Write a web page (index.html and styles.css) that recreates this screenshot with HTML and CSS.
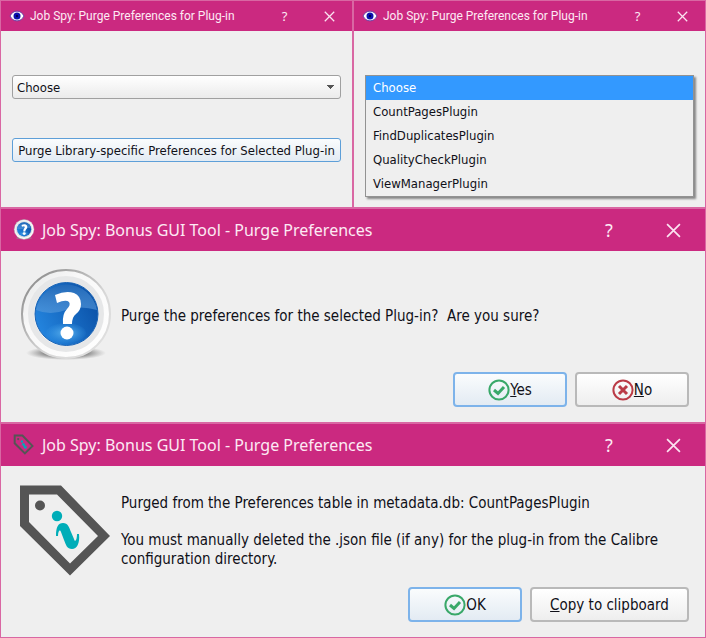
FILE: index.html
```html
<!DOCTYPE html>
<html lang="en">
    <head>
        <meta charset="UTF-8">
        <meta name="viewport" content="width=device-width, initial-scale=1.0">
        <title>Job Spy: Purge Preferences</title>
        <link rel="stylesheet" href="styles.css">
    </head>
    <body>
        <svg class="defs" aria-hidden="true">
            <defs>
                <linearGradient id="ring" x1="0" y1="0" x2="1" y2="1">
                    <stop offset="0" stop-color="#e6e7e8"/>
                    <stop offset="0.35" stop-color="#f8f8f8"/>
                    <stop offset="1" stop-color="#ffffff"/>
                </linearGradient>
                <linearGradient id="edge" x1="0" y1="0" x2="1" y2="1">
                    <stop offset="0" stop-color="#808080"/>
                    <stop offset="0.6" stop-color="#d8d8d8"/>
                    <stop offset="1" stop-color="#e2e2e2"/>
                </linearGradient>
                <linearGradient id="ball" x1="0" y1="0.8" x2="1" y2="0.3">
                    <stop offset="0" stop-color="#2588e2"/>
                    <stop offset="1" stop-color="#0a50a6"/>
                </linearGradient>
                <linearGradient id="gloss" x1="0" y1="0" x2="0" y2="1">
                    <stop offset="0" stop-color="#2068b8"/>
                    <stop offset="1" stop-color="#5a9cdc" stop-opacity="0.6"/>
                </linearGradient>
                <radialGradient id="glow">
                    <stop offset="0" stop-color="#5fb4ee"/>
                    <stop offset="1" stop-color="#3a9ae6" stop-opacity="0.1"/>
                </radialGradient>
                <radialGradient id="shade">
                    <stop offset="0.5" stop-color="#808080"/>
                    <stop offset="1" stop-color="#a0a0a0" stop-opacity="0"/>
                </radialGradient>
            </defs>
            <symbol id="eye" viewBox="0 0 16 12">
                <path d="M1 6C4 -0.500 12 -0.500 15 6C12 12.500 4 12.500 1 6Z" fill="#fff" stroke="#6d3fa5" stroke-width="1"/>
                <circle cx="8" cy="6" r="3.500" fill="#0b12b0"/>
                <circle cx="8" cy="6" r="1.200" fill="#00004d"/>
            </symbol>
            <symbol id="question" viewBox="0 0 92 98">
                <ellipse cx="46" cy="85" rx="40" ry="7" fill="url(#shade)"/>
                <circle cx="46" cy="46" r="44" fill="url(#ring)" stroke="url(#edge)" stroke-width="2"/>
                <circle cx="46" cy="46" r="35" fill="none" stroke="#e6e7e8" stroke-width="6"/>
                <circle cx="46.500" cy="46" r="31.500" fill="url(#ball)" stroke="#1a63b4" stroke-width="1"/>
                <ellipse cx="46" cy="65" rx="20" ry="10" fill="url(#glow)"/>
                <path d="M16 42A31 31 0 0 1 77 42Q60 37 46 42Q30 48 16 42Z" fill="url(#gloss)"/>
                <path d="M35 27Q46 22 54 25Q61 28 61 36Q61 42 56 46Q52 49 52 56L43 56Q42 46 47 41Q51 37 49 34Q46 31 37 35Z" fill="#fff"/>
                <circle cx="47" cy="65" r="6.500" fill="#fff"/>
            </symbol>
            <symbol id="tag" viewBox="0 0 92 98">
                <path d="M0 2.500H41L90 53L50 92.500L0 43ZM9 11.500V39L50 80.500L78 53L37 11.500Z" fill="#555" fill-rule="evenodd"/>
                <circle cx="20" cy="22.500" r="5" fill="#555"/>
                <circle cx="37" cy="33" r="5.200" fill="#00adb8"/>
                <path d="M36 53C36 44 38 40 43 40C48 40 49 44 51 49L54 56C55 60 57 57 57 51L59 51C60 60 57 66 52 66C47 66 46 62 44 57L41 49C40 46 38 48 38 53Z" fill="#00adb8"/>
            </symbol>
            <symbol id="ok" viewBox="0 0 22 22">
                <circle cx="11" cy="11" r="9.600" fill="none" stroke="#39a869" stroke-width="2"/>
                <path d="M6 11L10 14.500L16 8" fill="none" stroke="#39a869" stroke-width="3"/>
            </symbol>
            <symbol id="no" viewBox="0 0 22 22">
                <circle cx="11" cy="11" r="9.600" fill="none" stroke="#ba3b46" stroke-width="2"/>
                <path d="M7 7L15 15M15 7L7 15" fill="none" stroke="#ba3b46" stroke-width="3"/>
            </symbol>
            <symbol id="close" viewBox="0 0 14 14">
                <path d="M1 1L13 13M13 1L1 13" fill="none" stroke="#fbe3f0" stroke-width="1.600"/>
            </symbol>
        </svg>
        <main class="board">
            <div class="row">
                <section class="window">
                    <header class="titlebar">
                        <svg class="eye"><use href="#eye"/></svg>
                        <h1>Job Spy: Purge Preferences for Plug-in</h1>
                        <button class="caption" type="button">?</button>
                        <button class="caption" type="button" aria-label="Close"><svg><use href="#close"/></svg></button>
                    </header>
                    <form class="purge">
                        <select class="combo" aria-label="Plug-in">
                            <option>Choose</option>
                            <option>CountPagesPlugin</option>
                            <option>FindDuplicatesPlugin</option>
                            <option>QualityCheckPlugin</option>
                            <option>ViewManagerPlugin</option>
                        </select>
                        <button class="button default" type="button">Purge Library-specific Preferences for Selected Plug-in</button>
                    </form>
                </section>
                <section class="window">
                    <header class="titlebar">
                        <svg class="eye"><use href="#eye"/></svg>
                        <h1>Job Spy: Purge Preferences for Plug-in</h1>
                        <button class="caption" type="button">?</button>
                        <button class="caption" type="button" aria-label="Close"><svg><use href="#close"/></svg></button>
                    </header>
                    <form class="purge">
                        <select class="list" size="5" aria-label="Plug-in">
                            <option selected>Choose</option>
                            <option>CountPagesPlugin</option>
                            <option>FindDuplicatesPlugin</option>
                            <option>QualityCheckPlugin</option>
                            <option>ViewManagerPlugin</option>
                        </select>
                    </form>
                </section>
            </div>
            <section class="window large">
                <header class="titlebar">
                    <svg class="small-icon"><use href="#question"/></svg>
                    <h1>Job Spy: Bonus GUI Tool - Purge Preferences</h1>
                    <button class="caption" type="button">?</button>
                    <button class="caption" type="button" aria-label="Close"><svg><use href="#close"/></svg></button>
                </header>
                <div class="message">
                    <svg class="big-icon"><use href="#question"/></svg>
                    <p>Purge the preferences for the selected Plug-in?&nbsp; Are you sure?</p>
                </div>
                <div class="actions">
                    <button class="button default" type="button"><svg><use href="#ok"/></svg><span><u>Y</u>es</span></button>
                    <button class="button" type="button"><svg><use href="#no"/></svg><span><u>N</u>o</span></button>
                </div>
            </section>
            <section class="window large">
                <header class="titlebar">
                    <svg class="small-icon"><use href="#tag"/></svg>
                    <h1>Job Spy: Bonus GUI Tool - Purge Preferences</h1>
                    <button class="caption" type="button">?</button>
                    <button class="caption" type="button" aria-label="Close"><svg><use href="#close"/></svg></button>
                </header>
                <div class="message">
                    <svg class="big-icon"><use href="#tag"/></svg>
                    <div>
                        <p>Purged from the Preferences table in metadata.db: CountPagesPlugin</p>
                        <p>You must manually deleted the .json file (if any) for the plug-in from the Calibre configuration directory.</p>
                    </div>
                </div>
                <div class="actions">
                    <button class="button default" type="button"><svg><use href="#ok"/></svg><span>OK</span></button>
                    <button class="button wide" type="button"><span><u>C</u>opy to clipboard</span></button>
                </div>
            </section>
        </main>
    </body>
</html>
```
FILE: styles.css
```css
* {
    box-sizing: border-box;
}
body {
    margin: 0;
    font-family: "DejaVu Sans Condensed", "DejaVu Sans", sans-serif;
    font-size: 13px;
    color: #101018;
    background-color: #efefef;
}
/* display: none would switch the gradients off */
.defs {
    position: absolute;
    width: 0;
    height: 0;
}
.row {
    display: flex;
}
.window {
    border: 1px solid #d967a3;
    background-color: #efefef;
}
.row .window {
    flex: 1;
    min-width: 0;
    min-height: 208px;
}
.titlebar {
    display: flex;
    align-items: center;
    height: 30px;
    padding-left: 8px;
    color: #fdeaf4;
    background-color: #cb2980;
}
.titlebar h1 {
    flex: 1;
    margin: 0;
    font-family: Roboto, sans-serif;
    font-size: 12px;
    font-weight: normal;
    white-space: nowrap;
}
.eye {
    width: 16px;
    height: 12px;
    margin-right: 5px;
}
.caption {
    display: flex;
    justify-content: center;
    align-items: center;
    width: 45px;
    height: 100%;
    padding: 0;
    border: none;
    background: none;
    color: inherit;
    font: 13px "Noto Sans", sans-serif;
}
.caption svg {
    width: 11px;
    height: 11px;
}
.purge {
    display: flex;
    flex-direction: column;
    gap: 39px;
    padding: 44px 11px 8px;
}
.combo {
    height: 24px;
    padding: 0 4px;
    border: 1px solid #a0a0a0;
    border-radius: 3px;
    appearance: none;
    /* arrow at the right edge, over the face of the box */
    background:
        linear-gradient(45deg, transparent 50%, #555 50%) right 10px center / 4px 4px no-repeat,
        linear-gradient(-45deg, transparent 50%, #555 50%) right 6px center / 4px 4px no-repeat,
        linear-gradient(#fff, #ebebeb);
    color: inherit;
    font: inherit;
}
.list {
    height: 122px;
    padding: 0;
    border: 1px solid #929292;
    border-radius: 0;
    outline: none;
    overflow: hidden;
    background-color: #efefef;
    box-shadow: 2px 2px 2px #888;
    color: inherit;
    font: inherit;
}
.list option {
    height: 24px;
    padding: 4px 7px;
}
.list option:checked {
    background: #3399ff linear-gradient(#3399ff, #3399ff);
    color: #fff;
}
.button {
    display: flex;
    justify-content: center;
    align-items: center;
    height: 24px;
    padding: 0;
    border: 1px solid #adadad;
    border-radius: 3px;
    background: linear-gradient(#fff, #eee);
    color: inherit;
    font: inherit;
    white-space: nowrap;
}
.button.default {
    border-color: #5e9fd8;
    background: linear-gradient(#fafcfd, #e3ebf3);
}
.large {
    font-size: 15px;
}
.large .titlebar {
    height: 42px;
    padding-left: 12px;
}
.large .titlebar h1 {
    font-family: "Noto Sans", sans-serif;
    font-size: 16px;
}
.small-icon {
    width: 22px;
    height: 22px;
    margin-right: 7px;
}
.large .caption {
    width: 64px;
    font-size: 18px;
}
.large .caption svg {
    width: 15px;
    height: 15px;
}
.message {
    display: flex;
    align-items: center;
    gap: 9px;
    height: 121px;
    padding: 10px 19px 0;
}
.message p {
    margin: 0;
    line-height: 19px;
}
.message p + p {
    margin-top: 18px;
}
.big-icon {
    flex: none;
    width: 92px;
    height: 98px;
}
.actions {
    display: flex;
    justify-content: flex-end;
    gap: 8px;
    padding: 0 16px 15px;
}
.actions .button {
    width: 114px;
    height: 35px;
    border-width: 2px;
    border-color: #b9b9b9;
    border-radius: 4px;
}
.actions .button.default {
    border-color: #7db3ea;
}
.actions .wide {
    width: 159px;
}
.actions svg {
    width: 22px;
    height: 22px;
}
```
